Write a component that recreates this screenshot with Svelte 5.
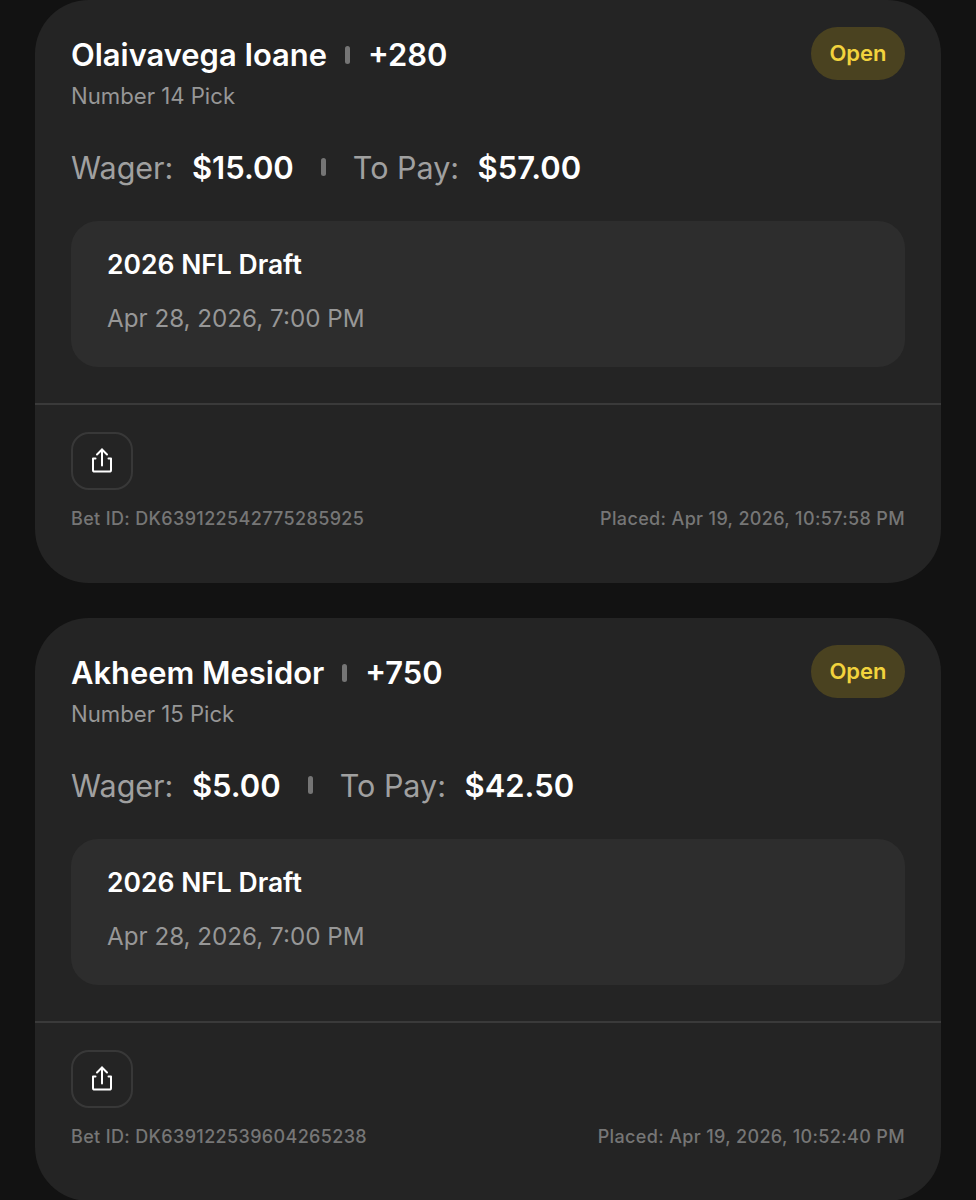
<script lang="ts">
  const bets = [
    { name: "Olaivavega Ioane", odds: "+280", pick: "Number 14 Pick", wager: "$15.00", toPay: "$57.00", betId: "DK639122542775285925", placed: "Apr 19, 2026, 10:57:58 PM" },
    { name: "Akheem Mesidor", odds: "+750", pick: "Number 15 Pick", wager: "$5.00", toPay: "$42.50", betId: "DK639122539604265238", placed: "Apr 19, 2026, 10:52:40 PM" }
  ];
</script>

<div class="page">
  {#each bets as bet}
    <div class="card">
      <div class="top">
        <div class="header">
          <div>
            <div class="title">
              <span>{bet.name}</span>
              <i class="sep"></i>
              <span>{bet.odds}</span>
            </div>
            <div class="pick">{bet.pick}</div>
          </div>
          <span class="status">Open</span>
        </div>

        <div class="amounts">
          <span class="label">Wager:</span>
          <span class="value">{bet.wager}</span>
          <i class="sep small"></i>
          <span class="label">To Pay:</span>
          <span class="value">{bet.toPay}</span>
        </div>

        <div class="event">
          <div class="event-name">2026 NFL Draft</div>
          <div class="event-date">Apr 28, 2026, 7:00 PM</div>
        </div>
      </div>

      <div class="bottom">
        <button class="share" aria-label="Share">
          <svg width="22" height="26" viewBox="0 0 22 26" fill="none" stroke="#fff" stroke-width="2" stroke-linecap="round" stroke-linejoin="round">
            <path d="M11 17.5V1.5" />
            <path d="M6 6.5l5-5 5 5" />
            <path d="M4.5 10.5H2v11.5c0 1 .7 1.6 1.6 1.6h14.8c.9 0 1.6-.6 1.6-1.6V10.5h-2.5" />
          </svg>
        </button>
        <div class="meta">
          <span>Bet ID: {bet.betId}</span>
          <span>Placed: {bet.placed}</span>
        </div>
      </div>
    </div>
  {/each}
</div>

<style>
  :global(body) {
    background: #121212;
  }

  .page {
    display: flex;
    flex-direction: column;
    gap: 35px;
    height: 1200px;
    overflow: hidden;
    padding: 0 35px;
    box-sizing: border-box;
    font-family: Inter, "Liberation Sans", sans-serif;
  }

  .card {
    flex: none;
    height: 583px;
    box-sizing: border-box;
    background: #242424;
    border-radius: 54px;
  }

  .top {
    padding: 27px 36px 36px;
    border-bottom: 2px solid #3a3a3a;
  }

  .header {
    display: flex;
    justify-content: space-between;
    align-items: flex-start;
  }

  .title {
    display: flex;
    align-items: center;
    gap: 18px;
    font-size: 30.9px;
    line-height: 56px;
    font-weight: 600;
    color: #fff;
  }

  .sep {
    width: 5px;
    height: 18px;
    border-radius: 3px;
    background: #757575;
  }

  .pick {
    font-size: 22.15px;
    line-height: 26px;
    color: #979797;
  }

  .status {
    padding: 0 18.5px;
    line-height: 53px;
    border-radius: 27px;
    background: #4a4220;
    color: #f2d33d;
    font-size: 22px;
    font-weight: 600;
  }

  .amounts {
    display: flex;
    align-items: center;
    height: 44px;
    margin-top: 36px;
    font-size: 31px;
  }

  .label {
    color: #a0a0a0;
    font-size: 30.5px;
    margin-right: 18.5px;
  }

  .value {
    color: #fff;
    font-weight: 600;
  }

  .sep.small {
    margin: 0 27px;
  }

  .event {
    margin-top: 32px;
    height: 146px;
    box-sizing: border-box;
    padding: 25px 36px;
    border-radius: 27px;
    background: #2d2d2d;
  }

  .event-name {
    font-size: 26.5px;
    line-height: 36px;
    font-weight: 600;
    color: #fff;
  }

  .event-date {
    margin-top: 19px;
    font-size: 24.2px;
    line-height: 36px;
    color: #979797;
  }

  .bottom {
    padding: 27px 36px 0;
  }

  .share {
    display: flex;
    align-items: center;
    justify-content: center;
    width: 62px;
    height: 58px;
    padding: 0;
    border: 2px solid #383838;
    border-radius: 18px;
    background: transparent;
  }

  .meta {
    display: flex;
    justify-content: space-between;
    margin-top: 16px;
    font-size: 18px;
    line-height: 26px;
    font-weight: 500;
    letter-spacing: 0.35px;
    color: #767676;
  }
</style>
